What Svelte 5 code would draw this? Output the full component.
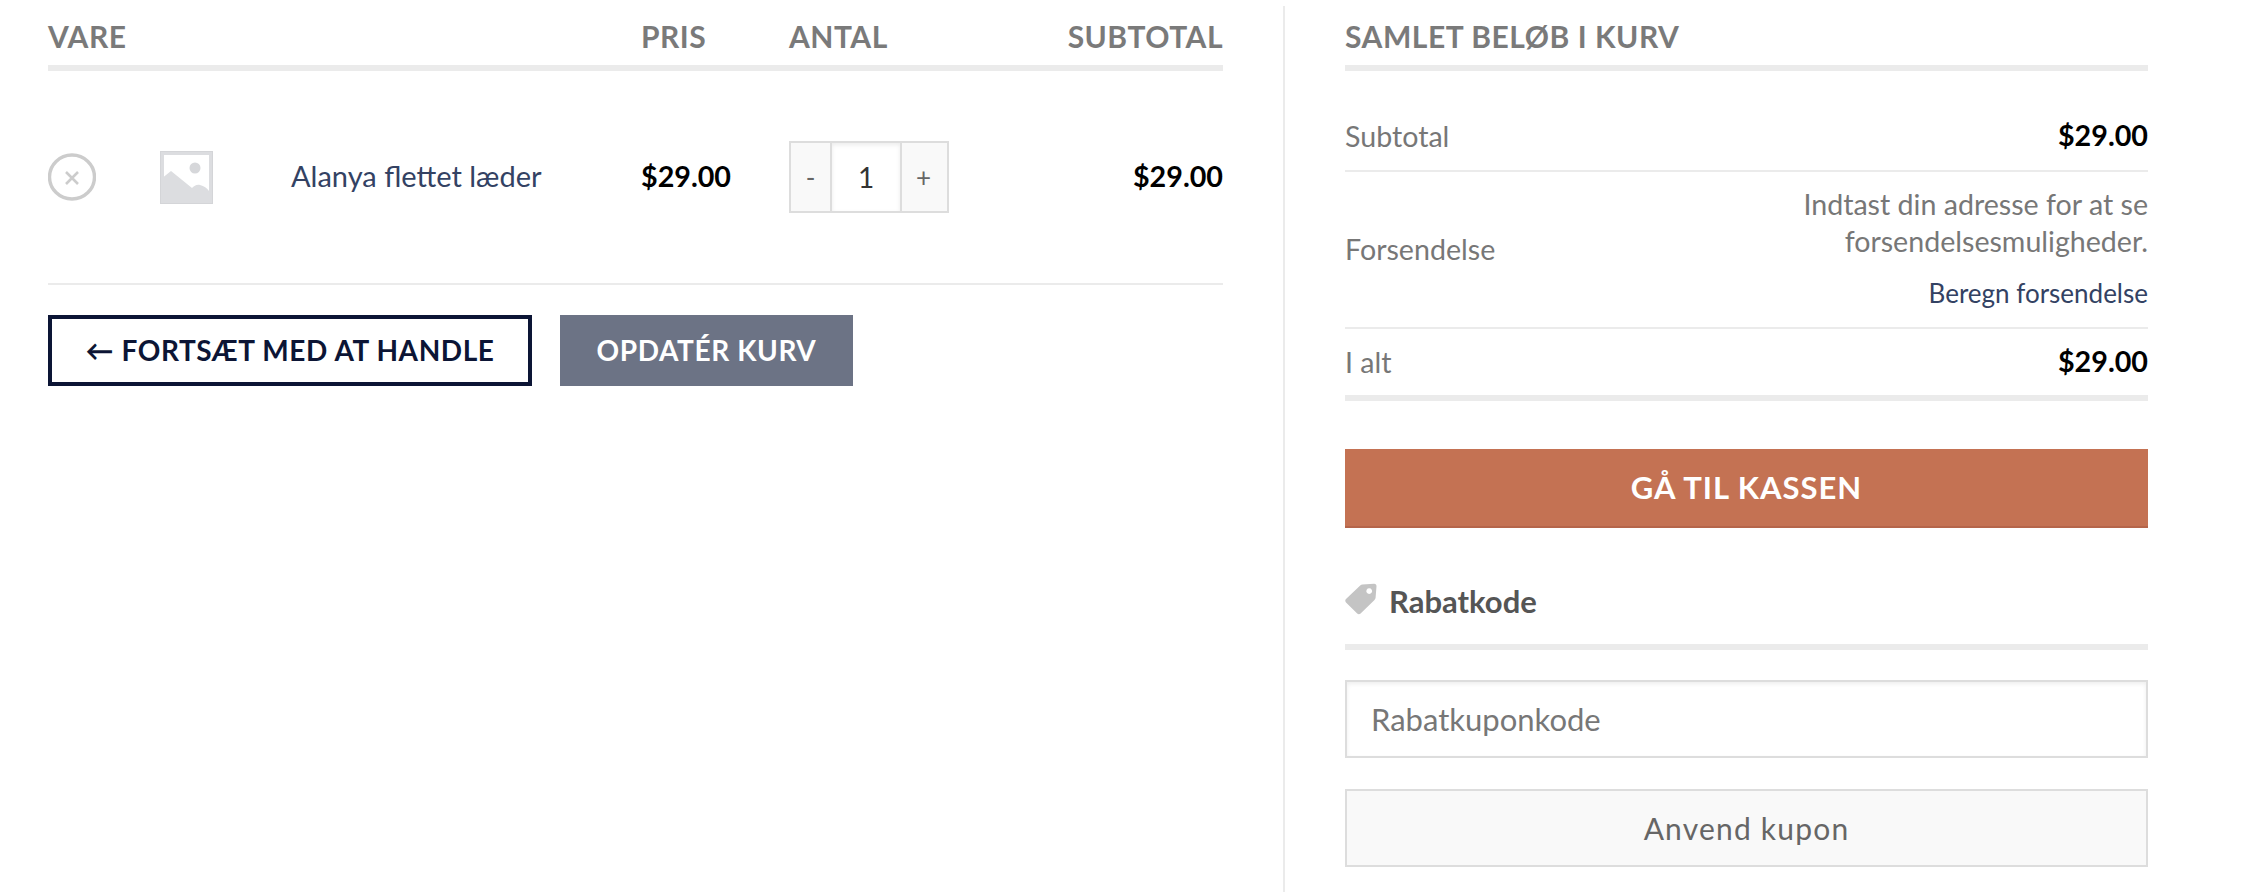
<script lang="ts">
  let qty = 1;
  const price = '$29.00';
</script>

<main class="cart">
  <section class="items">
    <div class="grid head">
      <span class="vare">Vare</span>
      <span>Pris</span>
      <span>Antal</span>
      <span class="end">Subtotal</span>
    </div>

    <div class="grid row">
      <div class="product">
        <a class="remove" href="#top" aria-label="Fjern">
          <svg viewBox="0 0 48 48" width="48" height="48" fill="none" stroke="#ccc">
            <ellipse cx="24" cy="24" rx="22.5" ry="22" stroke-width="3.4" />
            <path d="M18 19l12 12M30 19L18 31" stroke-width="2.6" />
          </svg>
        </a>
        <svg class="thumb" viewBox="0 0 53 53" width="53" height="53">
          <rect width="53" height="53" fill="#dcdde0" />
          <rect x="4" y="4" width="45" height="45" fill="#fff" />
          <circle cx="35" cy="17" r="5.5" fill="#d6d7da" />
          <path d="M3.5 26L11 20L32 37C34 35 37 33 40 34C44 35 47 37 49 40V50H3.5Z" fill="#dcdde0" />
          <rect x="0.5" y="0.5" width="52" height="52" fill="none" stroke="#d4d5d8" />
        </svg>
        <a class="name" href="#top">Alanya flettet læder</a>
      </div>
      <strong class="price up">{price}</strong>
      <div class="qty">
        <button type="button">-</button>
        <input type="text" bind:value={qty} />
        <button type="button">+</button>
      </div>
      <strong class="price up end">{price}</strong>
    </div>

    <div class="actions">
      <a class="btn outline" href="#top">← Fortsæt med at handle</a>
      <button class="btn update" type="button">Opdatér kurv</button>
    </div>
  </section>

  <aside class="totals">
    <h2>Samlet beløb i kurv</h2>

    <div class="line first">
      <span>Subtotal</span>
      <strong class="price up">{price}</strong>
    </div>
    <div class="line shipping">
      <span>Forsendelse</span>
      <div class="ship-info">
        <p>Indtast din adresse for at se forsendelsesmuligheder.</p>
        <a href="#top">Beregn forsendelse</a>
      </div>
    </div>
    <div class="line last">
      <span>I alt</span>
      <strong class="price up">{price}</strong>
    </div>

    <a class="checkout" href="#top">Gå til kassen</a>

    <h3>
      <svg viewBox="0 0 32 32" width="32" height="32">
        <path fill="#c4c4c4" fill-rule="evenodd" d="M17.5 1.5L29 0.8C30.6 0.7 31.6 1.8 31.5 3.3L30.6 14.6C30.5 15.6 30.2 16.2 29.5 16.9L15.6 30.6C14.6 31.6 13.2 31.6 12.2 30.6L1 19.5C0 18.5 0 17.1 1 16.1L15.2 2.4C15.9 1.8 16.6 1.6 17.5 1.5ZM24.2 5.2A2.9 2.9 0 1 0 24.21 5.2Z" />
      </svg>
      Rabatkode
    </h3>

    <input class="coupon" type="text" placeholder="Rabatkuponkode" />
    <button class="apply" type="button">Anvend kupon</button>
  </aside>
</main>

<style>
  :global(body) {
    background: #fff;
    color: #666;
    font-family: Lato, "Liberation Sans", sans-serif;
    font-size: 29px;
    overflow: hidden;
  }

  a {
    text-decoration: none;
  }

  .cart {
    display: flex;
    height: 892px;
    box-sizing: border-box;
    padding: 6px 0 0 48px;
  }

  .items {
    width: 1175px;
  }

  .grid {
    display: grid;
    grid-template-columns: 593px 148px 1fr 1fr;
    align-items: center;
  }

  .head {
    height: 59px;
    border-bottom: 6px solid #ebebeb;
    color: #7a7a7a;
    font-size: 30px;
    font-weight: 700;
    letter-spacing: 0.5px;
    text-transform: uppercase;
    line-height: 40px;
  }

  .end {
    text-align: right;
  }

  .row {
    height: 212px;
    border-bottom: 2px solid #ebebeb;
  }

  .product {
    display: flex;
    align-items: center;
  }

  .remove {
    display: flex;
    width: 112px;
  }

  .thumb {
    margin-right: 78px;
  }

  .name {
    color: #334263;
    font-size: 29px;
    padding-bottom: 4px;
  }

  .price {
    color: #000;
    font-size: 28.7px;
    font-weight: 700;
    white-space: nowrap;
  }

  .up {
    padding-bottom: 2px;
  }

  .qty {
    display: flex;
    width: 160px;
    height: 72px;
    box-sizing: border-box;
    border: 2px solid #ddd;
  }

  .qty button {
    width: 39px;
    padding: 0;
    border: 0;
    background: #f9f9f9;
    color: #666;
    font: inherit;
    font-size: 26px;
  }

  .qty input {
    width: 72px;
    box-sizing: border-box;
    padding: 0;
    border: solid #ddd;
    border-width: 0 2px;
    box-shadow: inset 0 2px 4px rgba(0, 0, 0, 0.08);
    color: #333;
    font: inherit;
    font-size: 28px;
    text-align: center;
    outline: none;
  }

  .qty button:last-child {
    flex: 1;
    padding-right: 2px;
  }

  .actions {
    display: flex;
    gap: 28px;
    margin-top: 30px;
  }

  .btn {
    display: flex;
    align-items: center;
    justify-content: center;
    height: 71px;
    box-sizing: border-box;
    padding: 0 0 2px;
    font-family: inherit;
    font-size: 28px;
    font-weight: 700;
    letter-spacing: 0.6px;
    text-transform: uppercase;
  }

  .outline {
    width: 484px;
    border: 4px solid #0c1535;
    color: #0c1535;
  }

  .update {
    width: 293px;
    border: 0;
    background: #6c7385;
    color: #fff;
  }

  .totals {
    width: 865px;
    margin-left: 60px;
    padding-left: 60px;
    border-left: 2px solid #ebebeb;
    box-sizing: border-box;
  }

  h2 {
    display: flex;
    align-items: center;
    height: 59px;
    margin: 0;
    border-bottom: 6px solid #ebebeb;
    color: #7a7a7a;
    font-size: 30px;
    font-weight: 700;
    letter-spacing: 0.55px;
    line-height: 40px;
    text-transform: uppercase;
  }

  .line {
    display: flex;
    justify-content: space-between;
    align-items: center;
    border-bottom: 2px solid #ebebeb;
    color: #777;
    font-size: 28.6px;
    box-sizing: border-box;
  }

  .first {
    height: 101px;
    padding-top: 31px;
  }

  .shipping {
    height: 157px;
    padding-bottom: 2px;
  }

  .last {
    height: 72px;
    border-bottom: 6px solid #ebebeb;
  }

  .ship-info {
    width: 400px;
    text-align: right;
  }

  .ship-info p {
    margin: 0 0 15px;
    line-height: 37px;
  }

  .ship-info a {
    color: #334263;
    font-size: 26px;
    line-height: 36px;
  }

  .checkout {
    display: block;
    height: 79px;
    margin-top: 48px;
    box-sizing: border-box;
    border-bottom: 2px solid #b5654a;
    background: #c47253;
    color: #fff;
    font-size: 31px;
    font-weight: 700;
    letter-spacing: 1px;
    line-height: 77px;
    text-align: center;
    text-transform: uppercase;
  }

  h3 {
    display: flex;
    align-items: center;
    gap: 12px;
    height: 122px;
    margin: 0;
    padding-top: 29px;
    box-sizing: border-box;
    border-bottom: 6px solid #ebebeb;
    color: #555;
    font-size: 31px;
    font-weight: 700;
  }

  h3 svg {
    margin-top: -3px;
  }

  .coupon {
    display: block;
    width: 100%;
    height: 78px;
    margin-top: 30px;
    padding: 0 24px;
    box-sizing: border-box;
    border: 2px solid #ddd;
    box-shadow: inset 0 2px 4px rgba(0, 0, 0, 0.07);
    font: inherit;
    font-size: 31px;
    outline: none;
  }

  .coupon::placeholder {
    color: #777;
    opacity: 1;
  }

  .apply {
    display: block;
    width: 100%;
    height: 78px;
    margin-top: 31px;
    border: 2px solid #ddd;
    background: #f9f9f9;
    color: #666;
    font: inherit;
    font-size: 30px;
    letter-spacing: 1.2px;
  }
</style>
